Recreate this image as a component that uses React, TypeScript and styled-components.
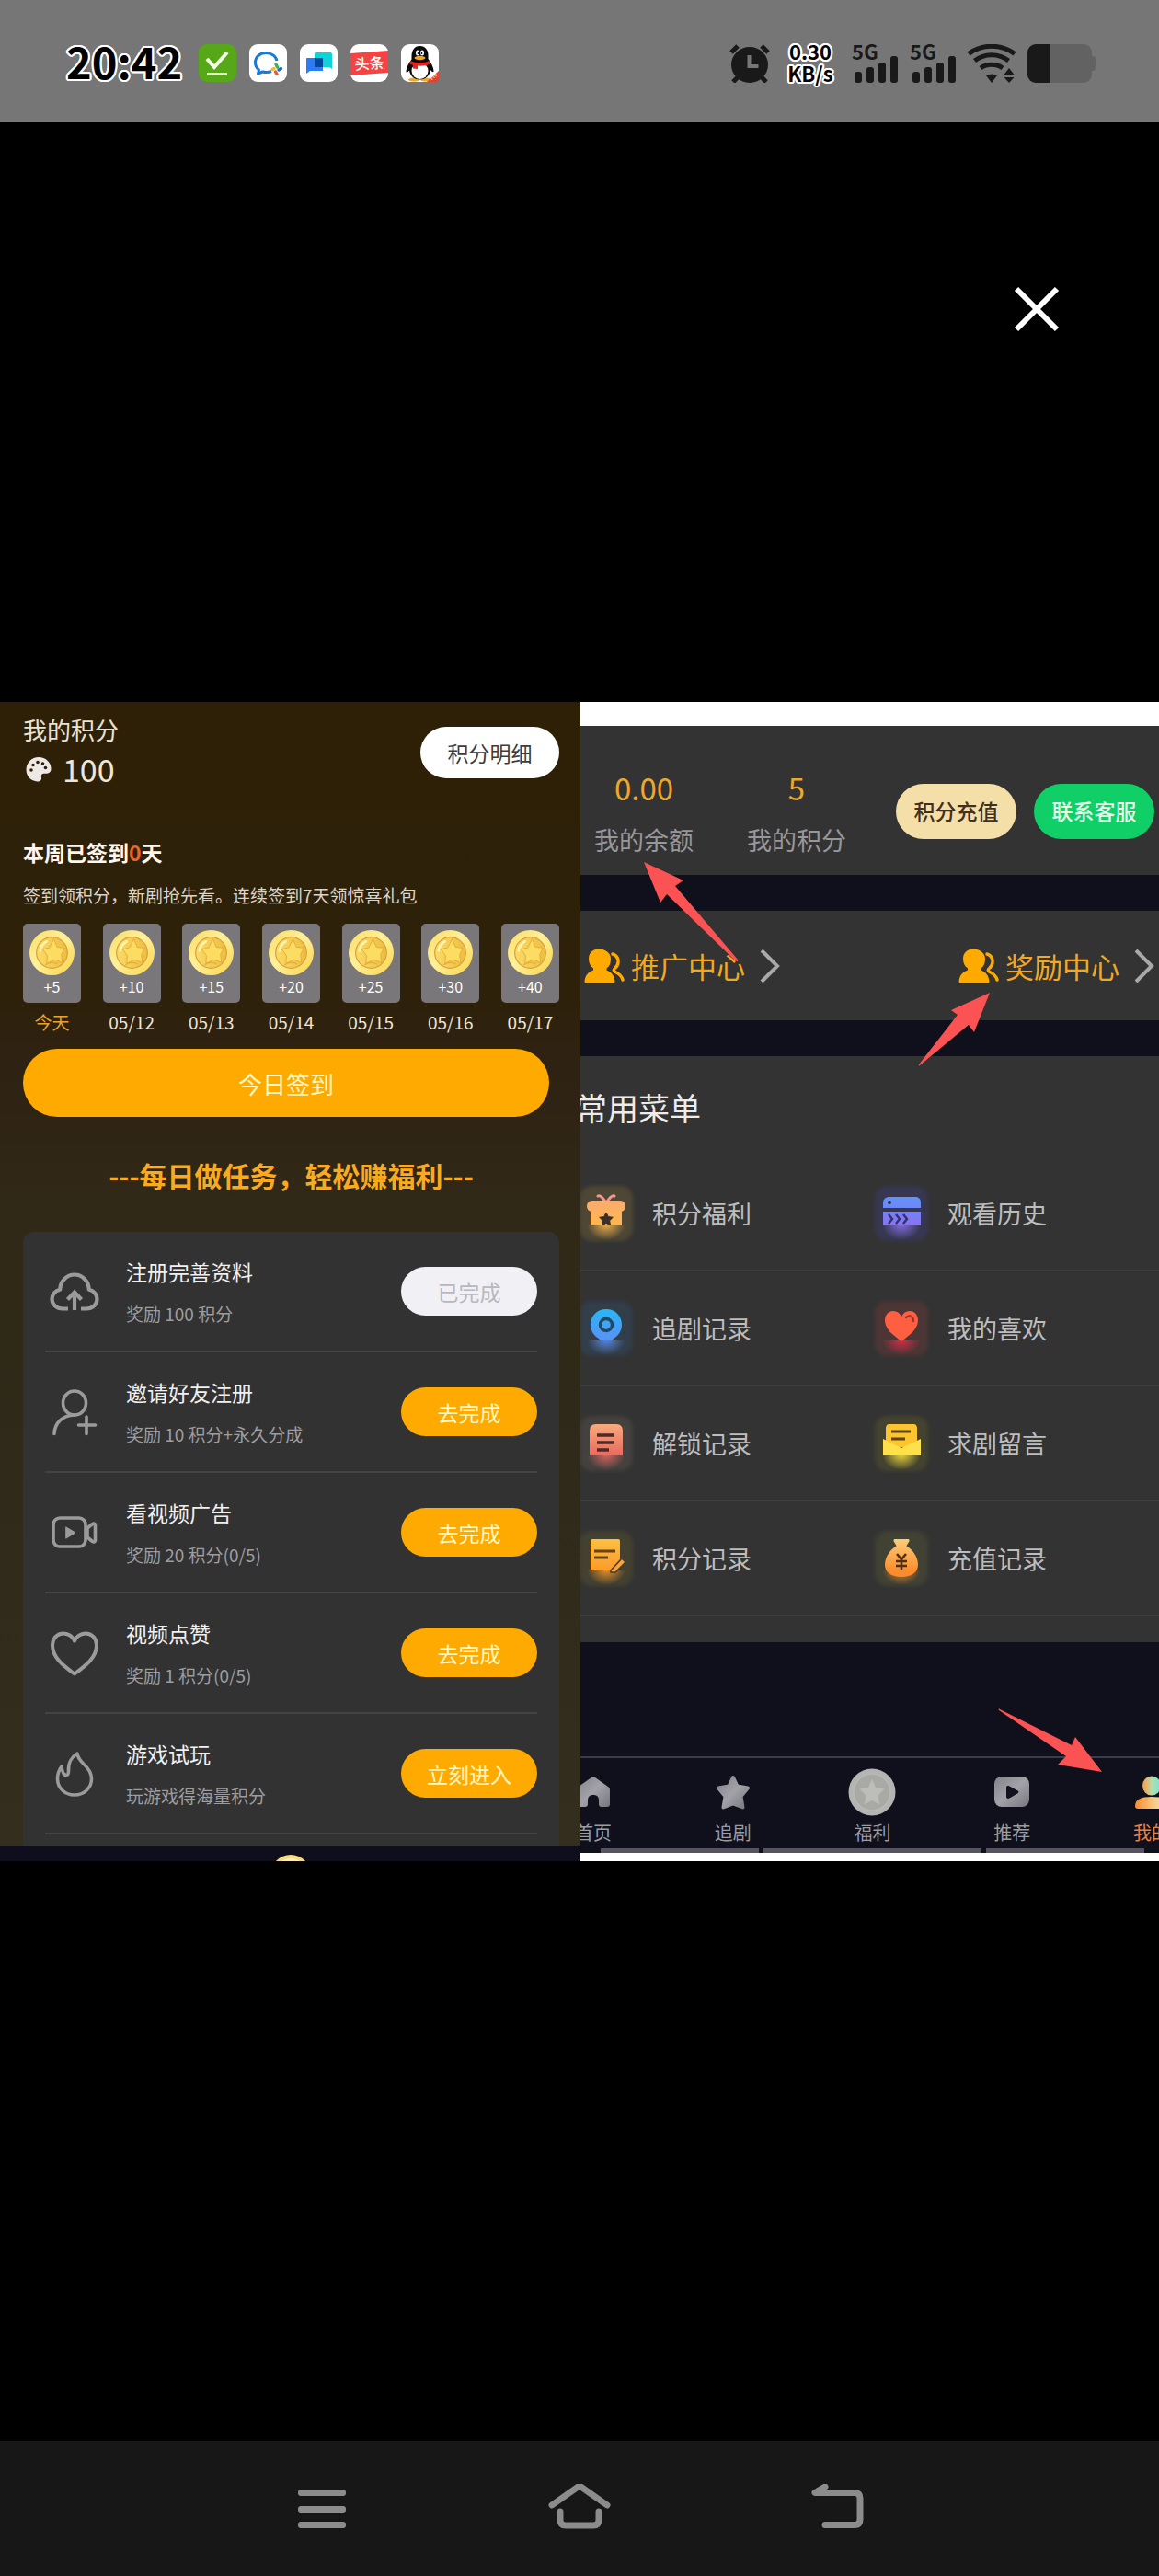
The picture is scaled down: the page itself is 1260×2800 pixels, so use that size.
import React from "react";
import styled, { createGlobalStyle } from "styled-components";

const GlobalStyle = createGlobalStyle`
  *, *::before, *::after { box-sizing: border-box; }
  html { background: #000; }
  body {
    margin: 0;
    background: #000;
    font-family: "Noto Sans CJK SC", "Noto Sans", sans-serif;
    color: #fff;
  }
  h2, h3, p, ul { margin: 0; padding: 0; font-weight: inherit; }
  ul { list-style: none; }
  svg { display: block; flex: none; }
  button { border: 0; margin: 0; padding: 0; font: inherit; color: inherit; background: none; cursor: pointer; }
  a { color: inherit; text-decoration: none; }
`;

const OUTLINE = `
  text-shadow: 2px 0 0 #fff, -2px 0 0 #fff, 0 2px 0 #fff, 0 -2px 0 #fff,
    1px 2px 0 #fff, -1px 2px 0 #fff, 1px -2px 0 #fff, -1px -2px 0 #fff,
    2px 1px 0 #fff, -2px 1px 0 #fff, 2px -1px 0 #fff, -2px -1px 0 #fff;
`;

const Page = styled.div`
  display: flex;
  flex-direction: column;
  min-height: 100vh;
  background: #000;
`;

/* ---------- status bar ---------- */
const StatusBar = styled.header`
  display: flex;
  align-items: center;
  justify-content: space-between;
  height: 133px;
  padding: 4px 69px 0 72px;
  background: #767676;
`;
const StatusGroup = styled.div<{ $gap: number }>`
  display: flex;
  align-items: center;
  gap: ${(p) => p.$gap}px;
`;
const Clock = styled.time`
  margin-right: 4px;
  padding-bottom: 6px;
  font-size: 47px;
  line-height: 48px;
  font-weight: 700;
  color: #000;
  ${OUTLINE}
`;
const NetSpeed = styled.div`
  display: grid;
  justify-content: center;
  width: 54px;
  margin: 0 6px 0 4px;
  padding-bottom: 4px;
  text-align: center;
  font-size: 22px;
  line-height: 24px;
  font-weight: 700;
  color: #000;
  ${OUTLINE}
`;
const Signal = styled.div`
  position: relative;
  width: 51px;
  height: 42px;
  color: #191919;
`;
const SignalLabel = styled.span`
  position: absolute;
  top: -4px;
  left: 0;
  font-size: 22px;
  line-height: 22px;
  font-weight: 700;
`;

/* ---------- stage ---------- */
const Stage = styled.main`
  position: relative;
  flex: 1;
  display: flex;
  flex-direction: column;
  justify-content: center;
`;
const CloseButton = styled.button`
  position: absolute;
  top: 171px;
  right: 101px;
  display: grid;
  place-items: center;
  width: 64px;
  height: 64px;
`;
const Photo = styled.div`
  display: grid;
  grid-template-columns: 631fr 629fr;
`;

/* ---------- left panel ---------- */
const Rewards = styled.section`
  display: flex;
  flex-direction: column;
  min-width: 0;
  background: linear-gradient(#2d2007 0%, #2e2109 24%, #2e2213 32%, #312918 44%, #2f2919 60%, #332e1e 100%);
`;
const RewardsBody = styled.div`
  display: flex;
  flex-direction: column;
  padding: 12px 23px 0 25px;
`;
const PointsHead = styled.div`
  display: flex;
  align-items: center;
  justify-content: space-between;
`;
const PointsTitle = styled.h2`
  font-size: 26px;
  line-height: 36px;
  color: #e9e3d6;
`;
const PointsValue = styled.div`
  display: flex;
  align-items: center;
  gap: 12px;
  margin-top: 3px;
  padding: 0 0 3px 3px;
  font-size: 34px;
  line-height: 44px;
  color: #efe6da;
`;
const DetailButton = styled.button`
  width: 151px;
  height: 56px;
  border-radius: 28px;
  background: #fff;
  color: #3c3c3c;
  font-size: 23px;
`;
const WeekTitle = styled.h3`
  margin-top: 48px;
  font-size: 23px;
  line-height: 34px;
  font-weight: 700;
  color: #fbf6ee;
`;
const WeekCount = styled.span`
  color: #ea6529;
`;
const WeekHint = styled.p`
  margin-top: 15px;
  font-size: 19px;
  line-height: 30px;
  color: #ddd5c8;
  white-space: nowrap;
`;
const Days = styled.ul`
  display: flex;
  justify-content: space-between;
  margin-top: 16px;
`;
const Day = styled.li<{ $today?: boolean }>`
  display: flex;
  flex-direction: column;
  align-items: center;
  gap: 9px;
  width: 63px;
  font-size: 19px;
  line-height: 24px;
  white-space: nowrap;
  color: ${(p) => (p.$today ? "#eba32b" : "#efe6da")};
`;
const CoinBox = styled.div`
  display: flex;
  flex-direction: column;
  align-items: center;
  width: 63px;
  height: 86px;
  padding-top: 7px;
  border-radius: 5px;
  background: #79777a;
  color: #fff;
  font-size: 16px;
`;
const SignButton = styled.button`
  height: 74px;
  margin: 17px 11px 0 0;
  border-radius: 37px;
  background: #ffaa00;
  color: #fff8c4;
  font-size: 26px;
`;
const TaskHeading = styled.h2`
  margin-top: 41px;
  text-align: center;
  font-size: 30px;
  line-height: 44px;
  font-weight: 700;
  color: #faaa1e;
`;
const Tasks = styled.ul`
  margin-top: 40px;
  padding: 0 24px 12px;
  border-radius: 12px 12px 0 0;
  background: #323232;
`;
const Task = styled.li`
  display: flex;
  align-items: center;
  height: 131px;
  padding-left: 4px;
  border-bottom: 2px solid #444;
  color: #9b9b9b;
`;
const TaskText = styled.div`
  flex: 1;
  margin-left: 28px;
`;
const TaskTitle = styled.h3`
  font-size: 23px;
  line-height: 32px;
  color: #f0f0f0;
`;
const TaskHint = styled.p`
  margin-top: 16px;
  font-size: 19px;
  line-height: 28px;
  color: #9d9da0;
`;
const TaskButton = styled.button<{ $done?: boolean }>`
  width: 148px;
  height: 53px;
  border-radius: 27px;
  font-size: 23px;
  background: ${(p) => (p.$done ? "#f1f1f5" : "#ffaa00")};
  color: ${(p) => (p.$done ? "#b9b7c0" : "#fff8c4")};
`;
const RewardsFoot = styled.div`
  display: flex;
  justify-content: center;
  height: 17px;
  padding-top: 9px;
  border-top: 1px solid #77757a;
  background: #0f0e1c;
  overflow: hidden;
`;

/* ---------- right panel ---------- */
const Profile = styled.section`
  position: relative;
  min-width: 0;
  overflow: hidden;
  padding: 26px 0 9px;
  background: #fff;
`;
/* The screen is wider than the panel, which crops it on both sides. */
const Screen = styled.div`
  display: flex;
  flex-direction: column;
  gap: 39px;
  margin: 0 -68px 0 -62px;
  background: #10101c;
`;
const Block = styled.div`
  background: #333;
`;
const Balance = styled(Block)`
  display: flex;
  align-items: center;
  padding: 49px 73px 22px 48px;
`;
const Stat = styled.div`
  display: grid;
  gap: 23px;
  width: 166px;
  text-align: center;
`;
const StatValue = styled.div`
  font-size: 33px;
  line-height: 36px;
  color: #eba92c;
`;
const StatLabel = styled.div`
  font-size: 27px;
  line-height: 32px;
  color: #98989b;
`;
const PillGroup = styled.div`
  display: flex;
  gap: 19px;
  margin: 0 0 4px auto;
`;
const Pill = styled.button<{ $green?: boolean }>`
  width: 131px;
  height: 60px;
  padding-bottom: 2px;
  border-radius: 30px;
  font-size: 23px;
  font-weight: 500;
  white-space: nowrap;
  background: ${(p) => (p.$green ? "#10cf66" : "#f5dfa8")};
  color: ${(p) => (p.$green ? "#e6fbe9" : "#40301f")};
`;
const Centers = styled(Block)`
  display: flex;
  align-items: center;
  justify-content: space-between;
  height: 119px;
  padding: 0 73px 0 66px;
`;
const CenterLink = styled.a`
  display: flex;
  align-items: center;
  font-size: 31px;
  line-height: 44px;
  color: #f2a81f;
`;
const CenterName = styled.span`
  margin: 0 16px 0 7px;
`;
const Menu = styled(Block)`
  padding-bottom: 28px;
`;
const MenuTitle = styled.h2`
  padding: 32px 0 29px 57px;
  font-size: 34px;
  line-height: 48px;
  color: #ececec;
`;
const MenuRow = styled.ul`
  display: grid;
  grid-template-columns: 321px 1fr;
  align-items: center;
  height: 125px;
  padding-left: 58px;
  border-bottom: 2px solid #3f3f40;
`;
const MenuLink = styled.a`
  display: flex;
  align-items: center;
  gap: 18px;
  font-size: 27px;
  line-height: 40px;
  color: #bdbdbe;
`;
const Tabs = styled.nav`
  display: grid;
  grid-template-columns: repeat(5, 1fr);
  margin-top: 85px;
  padding-top: 11px;
  border-top: 2px solid #3c3b47;
`;
const Tab = styled.a<{ $active?: boolean }>`
  display: flex;
  flex-direction: column;
  align-items: center;
  gap: 4px;
  font-size: 20px;
  line-height: 28px;
  color: ${(p) => (p.$active ? "#e5834c" : "#9c9ca3")};
`;
const Strip = styled.div`
  display: grid;
  grid-template-columns: 172fr 238fr 172fr;
  gap: 5px;
  margin: -36px 84px 0;
`;
const StripBar = styled.span`
  height: 5px;
  background: #575361;
`;
const Arrows = styled.svg`
  position: absolute;
  top: 0;
  left: 0;
  width: 100%;
  pointer-events: none;
`;

/* ---------- system navigation ---------- */
const SystemBar = styled.nav`
  display: flex;
  justify-content: center;
  gap: 200px;
  height: 147px;
  background: #171717;
`;
const SystemButton = styled.button`
  display: grid;
  place-items: center;
  width: 80px;
  color: #8c8c8c;
`;

/* ---------- drawings ---------- */
const Defs = () => (
  <svg width="0" height="0" style={{ position: "absolute" }} aria-hidden="true">
    <defs>
      <linearGradient id="gold" x1="0" y1="0" x2="1" y2="1">
        <stop offset="0" stopColor="#fbdc62" />
        <stop offset="0.45" stopColor="#fff09a" />
        <stop offset="1" stopColor="#fbd448" />
      </linearGradient>
      <linearGradient id="goldIn" x1="0" y1="0" x2="1" y2="0">
        <stop offset="0" stopColor="#fadb66" />
        <stop offset="1" stopColor="#efbd40" />
      </linearGradient>
      <linearGradient id="silver" x1="0" y1="0" x2="1" y2="1">
        <stop offset="0" stopColor="#84838a" />
        <stop offset="0.5" stopColor="#a3a2a9" />
        <stop offset="1" stopColor="#77767d" />
      </linearGradient>
      <linearGradient id="meHead" x1="0" y1="0" x2="1" y2="0">
        <stop offset="0.1" stopColor="#f3a64f" />
        <stop offset="0.5" stopColor="#b9dcae" />
        <stop offset="1" stopColor="#6fe6d2" />
      </linearGradient>
      <linearGradient id="meBody" x1="0" y1="0" x2="1" y2="0">
        <stop offset="0" stopColor="#fb8a2e" />
        <stop offset="0.5" stopColor="#f7c37a" />
        <stop offset="1" stopColor="#e7efc5" />
      </linearGradient>
      <filter id="soft" x="-20%" y="-20%" width="140%" height="140%">
        <feGaussianBlur stdDeviation="2" />
      </filter>
    </defs>
  </svg>
);

const Coin = ({ size }: { size: number }) => (
  <svg width={size} height={size} viewBox="0 0 48 48" aria-hidden="true">
    <circle cx="24" cy="24" r="24" fill="url(#gold)" />
    <circle cx="24" cy="24" r="16.500" fill="url(#goldIn)" stroke="#d9a13c" strokeWidth="1.200" />
    <path d="M11.500 22c.5-4 3-8 7-10" stroke="#fff3b0" strokeWidth="2.500" fill="none" strokeLinecap="round" />
    <path d="M17 37c4-3 9-3 13-1" stroke="#e5b040" strokeWidth="1.500" fill="none" />
    <path
      d="M26 9.500l3.500 8.500 8 1-3.500 7 1 8.500-8.500-3-8 4 .5-8.500-5-6.500 7.500-2z"
      fill="#fddc62"
      stroke="#e3aa3e"
      strokeWidth="0.900"
      strokeLinejoin="round"
    />
  </svg>
);

const Palette = () => (
  <svg width="28" height="28" viewBox="0 0 28 28" aria-hidden="true">
    <path d="M14 1C6.500 1 .5 7 .5 14.500S6 27 12.500 27.500c3 .2 5-1.500 4.500-4.500-.5-3.200.5-4.500 3.500-4.300 4.500.3 7-1 7-5.200C27.500 6.500 21.500 1 14 1z" fill="#efe9e6" />
    <g fill="#2d2007">
      <circle cx="6" cy="15" r="1.800" />
      <circle cx="8" cy="9.500" r="1.800" />
      <circle cx="13" cy="6.500" r="1.800" />
      <circle cx="18.500" cy="8" r="1.800" />
      <circle cx="21.500" cy="12.500" r="1.800" />
    </g>
  </svg>
);

const TaskIcon = ({ children }: { children: React.ReactNode }) => (
  <svg width="56" height="56" viewBox="0 0 56 56" fill="none" stroke="currentColor" strokeWidth="3.600" strokeLinecap="round" strokeLinejoin="round" aria-hidden="true">
    {children}
  </svg>
);

const CloudIcon = (
  <TaskIcon>
    <path d="M21 46.500h-6C8.500 46.500 3.500 42 3.500 36c0-5.200 3.700-9.300 8.700-10.200C12.500 16.500 19.500 9.500 28 9.500s15.500 7 15.800 16.300c5 .9 8.700 5 8.700 10.200 0 6-5 10.500-11.500 10.500h-6" strokeWidth="4.200" strokeLinecap="butt" />
    <path d="M28 48V29M20.500 36.500L28 28.500l7.500 8" strokeWidth="4.200" strokeLinecap="butt" strokeLinejoin="miter" />
  </TaskIcon>
);
const InviteIcon = (
  <TaskIcon>
    <ellipse cx="28" cy="18" rx="12.500" ry="13" />
    <path d="M6 51.500C6.500 39.500 15 31.500 28 31" />
    <path d="M41 33v18.500M32.500 42h18" />
  </TaskIcon>
);
const VideoIcon = (
  <TaskIcon>
    <rect x="5" y="12" width="35" height="31" rx="7" />
    <path d="M42 23l5.500-4.500c1.500-1 3-.5 3 1.500v16c0 2-1.500 2.500-3 1.500L42 33z" />
    <path d="M19 22l10 6-10 6z" fill="currentColor" strokeWidth="1" />
  </TaskIcon>
);
const HeartIcon = (
  <TaskIcon>
    <path d="M28 50.500C15 41 4 32 4 19.500 4 12 9 6.500 16 6.500c5.500 0 9.500 3 12 8 2.500-5 6.500-8 12-8 7 0 12 5.500 12 13C52 32 41 41 28 50.500z" strokeWidth="4" />
  </TaskIcon>
);
const FlameIcon = (
  <TaskIcon>
    <path d="M31 6C25 9.500 21 16.500 21.500 25c.1 3-1 4.500-2.300 4.500-3 0-4.700-4-5.200-9.500C11 24 9.500 28.500 9.500 33.500 9.500 43.500 17.500 51 28 51s18.500-7.500 18.500-17.500c0-7.500-4-12-8.500-16C34.500 14 31.500 11 31 6z" />
  </TaskIcon>
);

const PeopleIcon = () => (
  <svg width="44" height="38" viewBox="0 0 44 38" aria-hidden="true">
    <path d="M16 .5C9.500.5 5 5 5 11c0 5 2 8.500 5 10.500v2C4 26 1 29.500.5 36c0 .8.5 1.500 1.500 1.500h30c1 0 1.500-.7 1.500-1.500-.5-6.500-3.500-10-9-12.500v-2c3-2 4.500-5.500 4.500-10.500C29 5 23 .5 16 .5z" fill="#ffaa00" />
    <path d="M31 6c7 2 8 11 2.500 15.500C31.500 23 32 24.500 34 25.500c4 2 7 4.500 8 8.500" fill="none" stroke="#ffaa00" strokeWidth="3.400" strokeLinecap="round" />
  </svg>
);
const Chevron = () => (
  <svg width="22" height="36" viewBox="0 0 22 36" fill="none" stroke="#a9a9a9" strokeWidth="4" aria-hidden="true">
    <path d="M2 1l17 17L2 35" />
  </svg>
);

type TileProps = { tint: string; from: string; to: string; id: string; children: React.ReactNode };
const Tile = ({ tint, from, to, id, children }: TileProps) => (
  <svg width="64" height="64" viewBox="0 0 64 64" aria-hidden="true">
    <defs>
      <linearGradient id={id} gradientUnits="userSpaceOnUse" x1="0" y1="10" x2="0" y2="46">
        <stop offset="0" stopColor={from} />
        <stop offset="1" stopColor={to} />
      </linearGradient>
      <radialGradient id={id + "g"} gradientUnits="userSpaceOnUse" cx="32" cy="44" r="21" gradientTransform="translate(0 8.800) scale(1 0.800)">
        <stop offset="0" stopColor={to} stopOpacity="0.900" />
        <stop offset="0.500" stopColor={to} stopOpacity="0.450" />
        <stop offset="1" stopColor={to} stopOpacity="0" />
      </radialGradient>
    </defs>
    <rect x="3" y="2" width="58" height="60" rx="14" fill={tint} opacity="0.18" filter="url(#soft)" />
    <path d="M8 45h48v17H8z" fill={`url(#${id}g)`} />
    <g fill={`url(#${id})`}>{children}</g>
  </svg>
);

const INK = "#3b2f26";
const GiftTile = (
  <Tile id="gift" tint="#c9a040" from="#f9a778" to="#ffb84d">
    <path d="M31 19c-4-6-6-7-8-6M33 19c4-6 6-7 8-6" fill="none" stroke="#f29a8c" strokeWidth="3" strokeLinecap="round" />
    <path d="M17 18h30c4 0 6 3 6 6s-2 6-6 6H17c-4 0-6-3-6-6s2-6 6-6z" />
    <path d="M15 29h34v16H15z" />
    <path d="M32 31l2.300 4.600 5 .7-3.600 3.500.9 5L32 42.400l-4.600 2.400.9-5-3.600-3.500 5-.7z" fill={INK} stroke={INK} />
  </Tile>
);
const HistoryTile = (
  <Tile id="hist" tint="#4a4ae0" from="#5c97fb" to="#8a72ef">
    <path d="M12 26v-5c0-5 3-7 7-7h28c4 0 6 2 6 7v5z" />
    <path d="M12 30h41v15H12z" />
    <circle cx="19" cy="20" r="2" fill="#29305c" />
    <path d="M18 33l4 5-4 5M26 33l4 5-4 5M34 33l4 5-4 5" fill="none" stroke="#35306b" strokeWidth="2.400" />
  </Tile>
);
const PinTile = (
  <Tile id="pin" tint="#2f6fb0" from="#27b8f6" to="#5d8ff5">
    <path d="M32 11c10 0 17 7.500 17 17 0 7-4 12-9 15l-2 2H26l-2-2c-5-3-9-8-9-15 0-9.500 7-17 17-17z" />
    <circle cx="32" cy="28" r="6.500" fill="none" stroke="#23485f" strokeWidth="3.400" />
  </Tile>
);
const LoveTile = (
  <Tile id="love" tint="#c04040" from="#ff6f45" to="#e82a4a">
    <path d="M32 46C23 39 14 33 14 23c0-6 4-10 9-10 4 0 7 2 9 6 2-4 5-6 9-6 5 0 9 4 9 10 0 10-9 16-18 23z" fill="#fd5f40" />
    <path d="M37 20c4-3 8-1 8 4" fill="none" stroke="#a92f24" strokeWidth="2.400" strokeLinecap="round" />
  </Tile>
);
const UnlockTile = (
  <Tile id="unlock" tint="#908070" from="#f9ac7c" to="#e8685f">
    <path d="M21 11h22c5 0 7 3 7 8v26H14V19c0-5 2-8 7-8z" />
    <path d="M22 23h19M22 31h19M22 39h13" stroke="#4c2a26" strokeWidth="3.400" fill="none" />
  </Tile>
);
const MessageTile = (
  <Tile id="msg" tint="#8f8f20" from="#fbc62c" to="#fbe63c">
    <path d="M19 11h26c3 0 4 2 4 5v20H15V16c0-3 1-5 4-5z" fill="#fcc42e" />
    <path d="M12 27l20 10 21-10v18H12z" fill="#fde04a" />
    <path d="M21 19h21M21 27h15" stroke="#5c4410" strokeWidth="3.200" fill="none" />
  </Tile>
);
const NoteTile = (
  <Tile id="note" tint="#90802c" from="#fbc143" to="#fb9a2a">
    <path d="M17 11h28c1.500 0 2 1 2 2v24l-8 8H15V13c0-1 .5-2 2-2z" />
    <path d="M19 24h23M19 31h15" stroke="#6a4312" strokeWidth="3" fill="none" />
    <path d="M37 45l12-13 4 4-11 11h-5z" fill="#fba63a" stroke="#4f3b26" strokeWidth="1.600" />
  </Tile>
);
const BagTile = (
  <Tile id="bag" tint="#80803a" from="#fbcf7c" to="#fb8c2c">
    <path d="M25 11h14c2 0 2 2 1 3l-3 5H27l-3-5c-1-1-1-3 1-3z" />
    <path d="M27 18h10c7 4 13 12 13 21 0 8-7 13-18 13S14 47 14 39c0-9 6-17 13-21z" />
    <path d="M27 27l5 6 5-6M32 33v12M26 35h12M26 40h12" stroke="#4f3014" strokeWidth="2.600" fill="none" />
  </Tile>
);

const TabIcon = ({ children }: { children: React.ReactNode }) => (
  <svg width="52" height="52" viewBox="0 0 52 52" fill="url(#silver)" aria-hidden="true">
    {children}
  </svg>
);

const AppIcon = ({ bg, children }: { bg: string; children: React.ReactNode }) => (
  <svg width="41" height="41" viewBox="0 0 41 41" aria-hidden="true">
    <rect width="41" height="41" rx="9" fill={bg} />
    {children}
  </svg>
);

const SignalBars = () => (
  <Signal>
    <SignalLabel>5G</SignalLabel>
    <svg width="51" height="42" viewBox="0 0 51 42" fill="currentColor" aria-hidden="true">
      <rect x="3" y="30" width="8" height="12" rx="3" />
      <rect x="16" y="25" width="8" height="17" rx="3" />
      <rect x="29" y="20" width="8" height="22" rx="3" />
      <rect x="42" y="13" width="8" height="29" rx="3" />
    </svg>
  </Signal>
);

/* ---------- content ---------- */
const days = [
  ["+5", "今天"],
  ["+10", "05/12"],
  ["+15", "05/13"],
  ["+20", "05/14"],
  ["+25", "05/15"],
  ["+30", "05/16"],
  ["+40", "05/17"],
];

const tasks = [
  { icon: CloudIcon, title: "注册完善资料", hint: "奖励 100 积分", action: "已完成", done: true },
  { icon: InviteIcon, title: "邀请好友注册", hint: "奖励 10 积分+永久分成", action: "去完成" },
  { icon: VideoIcon, title: "看视频广告", hint: "奖励 20 积分(0/5)", action: "去完成" },
  { icon: HeartIcon, title: "视频点赞", hint: "奖励 1 积分(0/5)", action: "去完成" },
  { icon: FlameIcon, title: "游戏试玩", hint: "玩游戏得海量积分", action: "立刻进入" },
];

const menu = [
  [{ icon: GiftTile, name: "积分福利" }, { icon: HistoryTile, name: "观看历史" }],
  [{ icon: PinTile, name: "追剧记录" }, { icon: LoveTile, name: "我的喜欢" }],
  [{ icon: UnlockTile, name: "解锁记录" }, { icon: MessageTile, name: "求剧留言" }],
  [{ icon: NoteTile, name: "积分记录" }, { icon: BagTile, name: "充值记录" }],
];

const tabs = [
  {
    name: "首页",
    icon: (
      <TabIcon>
        <path d="M24 10c1-1 3-1 4 0l14 10c1.500 1 2 2 2 4v15c0 2-1 3-3 3h-6c-2 0-3-1-3-3v-4c0-4-2-6-6-6s-6 2-6 6v4c0 2-1 3-3 3h-6c-2 0-3-1-3-3V24c0-2 .5-3 2-4z" />
      </TabIcon>
    ),
  },
  {
    name: "追剧",
    icon: (
      <TabIcon>
        <path d="M26 10l4.500 9.500L42 21.500l-7.500 9 2 12L26 38.500 15.500 42.500l2-12-7.500-9 11.500-2z" stroke="url(#silver)" strokeWidth="4" strokeLinejoin="round" />
      </TabIcon>
    ),
  },
  {
    name: "福利",
    icon: (
      <TabIcon>
        <circle cx="26" cy="26" r="25.500" fill="#b4b5b2" />
        <circle cx="26" cy="26" r="20" fill="#a9aaa6" stroke="#b9bab6" strokeWidth="1.500" />
        <path d="M26 12l4 9 9.500 1.500-7 7 1.700 10L26 35l-8.200 4.500 1.700-10-7-7L22 21z" fill="#bdbdb9" />
      </TabIcon>
    ),
  },
  {
    name: "推荐",
    icon: (
      <TabIcon>
        <rect x="7" y="9" width="38" height="33" rx="8" />
        <path d="M20 21c0-2 2-2.500 3.500-1.500l9 5c1.200.7 1.200 2 0 2.800l-9 5.200C22 33.500 20 33 20 31z" fill="#12111d" />
      </TabIcon>
    ),
  },
  {
    name: "我的",
    active: true,
    icon: (
      <TabIcon>
        <ellipse cx="26" cy="19" rx="10" ry="10.500" fill="url(#meHead)" />
        <path d="M8 41c0-7 6-10 18-10s18 3 18 10c0 2-1 3-3 3H11c-2 0-3-1-3-3z" fill="url(#meBody)" />
      </TabIcon>
    ),
  },
];

export default function App() {
  return (
    <Page>
      <GlobalStyle />
      <Defs />
      <StatusBar>
        <StatusGroup $gap={14}>
          <Clock>20:42</Clock>
          <AppIcon bg="#57a818">
            <path d="M9 16l8 9L31 9" fill="none" stroke="#f6ffe9" strokeWidth="4" />
            <path d="M9 32.500h22" stroke="#e6f7cf" strokeWidth="3" />
          </AppIcon>
          <AppIcon bg="#fff">
            <path d="M30 18c-1-5-6-8.500-12-8.500-7 0-11.500 5-11.500 10.500 0 3 1.500 6 4 8l-1 4 5-2c4 1 7 .5 9.500-.5" fill="none" stroke="#1a7bd7" strokeWidth="3" strokeLinejoin="round" />
            <g strokeWidth="3.400" strokeLinecap="round">
              <path d="M29 22l1.500 3" stroke="#3fb549" />
              <path d="M32 28l2.500-1.500" stroke="#1a6fd0" />
              <path d="M28.500 30l1.500 2.500" stroke="#f0572a" />
              <path d="M25 27.500l2-1" stroke="#f8b72c" />
            </g>
          </AppIcon>
          <AppIcon bg="#fff">
            <path d="M17 9h16c1.500 0 2 1 2 2v16l-3-2H16V11c0-1 0-2 1-2z" fill="#0fd3d8" />
            <path d="M8 15h17v14H11l-4 3V16c0-.6.400-1 1-1z" fill="#2a7cf8" />
            <path d="M16 15h9v10h-9z" fill="#04479d" />
          </AppIcon>
          <AppIcon bg="#fff">
            <path d="M0 10l41-3v24L0 34z" fill="#f54242" />
            <text x="20.500" y="27" textAnchor="middle" fontSize="16" fontWeight="500" fill="#fff" transform="rotate(-4 20.500 20.500)">头条</text>
          </AppIcon>
          <AppIcon bg="#fff">
            <ellipse cx="14" cy="38.500" rx="6" ry="2" fill="#f8a71b" />
            <ellipse cx="27" cy="38.500" rx="6" ry="2" fill="#f8a71b" />
            <path d="M20.500 2c6 0 9 4.500 9 10v4c3 4 5.500 8 6 13 0 2-1.500 1.500-3.500-1-1 6-5 10.500-11.500 10.500S10 34.500 9 28.500c-2 2.500-3.500 3-3.500 1 .5-5 3-9 6-13v-4c0-5.500 3-10.500 9-10.500z" fill="#0a0a0a" />
            <ellipse cx="20.500" cy="29" rx="9" ry="9" fill="#fff" />
            <ellipse cx="18" cy="9.500" rx="2" ry="3" fill="#fff" />
            <ellipse cx="23" cy="9.500" rx="2" ry="3" fill="#fff" />
            <circle cx="18.500" cy="10" r="0.900" />
            <circle cx="22.500" cy="10" r="0.900" />
            <ellipse cx="20.500" cy="15" rx="6" ry="2.200" fill="#f8a71b" />
            <path d="M10.500 18c5 3 15 3 20 0l1 3.500c-6 3-15 3-22 0z" fill="#e8231e" />
            <path d="M13 21h5v6l-5-.5z" fill="#e8231e" />
            <path d="M41 29v8c0 2.500-1.500 4-4 4h-9z" fill="#e8402c" />
            <text x="36" y="37" textAnchor="middle" fontSize="5" fill="#fff" transform="rotate(-45 36 36)">Pro</text>
          </AppIcon>
        </StatusGroup>
        <StatusGroup $gap={12}>
          <svg width="46" height="42" viewBox="0 0 46 42" fill="#191919" aria-hidden="true">
            <path d="M3 9l7-7M43 9l-7-7" stroke="#191919" strokeWidth="5" />
            <ellipse cx="23" cy="22.500" rx="20" ry="19.500" />
            <path d="M10 36l-5 5M36 36l5 5" stroke="#191919" strokeWidth="5" />
            <path d="M22.500 12v12h10" fill="none" stroke="#767676" strokeWidth="4" />
          </svg>
          <NetSpeed>
            <span>0.30</span>
            <span>KB/s</span>
          </NetSpeed>
          <SignalBars />
          <SignalBars />
          <svg width="52" height="42" viewBox="0 0 52 42" fill="none" stroke="#191919" aria-hidden="true">
            <path d="M1 10.500C15-.5 37-.5 51 10.500M7.500 18c11-8.500 26-8.500 37 0M14 26c7-5 17-5 24 0" strokeWidth="5" />
            <path d="M20 34c4-2 8-2 12 0l-6 8zM45 26l5.500 7h-11zM45 42l5.500-6h-11z" fill="#191919" stroke="none" />
          </svg>
          <svg width="75" height="42" viewBox="0 0 75 42" aria-hidden="true">
            <path d="M26 0h36a9 9 0 0 1 9 9v4c3 0 4 1 4 3v10c0 2-1 3-4 3v4a9 9 0 0 1-9 9H26z" fill="#626262" />
            <path d="M26 0H10A9 9 0 0 0 1 9v24a9 9 0 0 0 9 9h16z" fill="#191919" />
          </svg>
        </StatusGroup>
      </StatusBar>

      <Stage>
        <CloseButton aria-label="关闭">
          <svg width="50" height="50" viewBox="0 0 50 50" stroke="#fff" strokeWidth="6" aria-hidden="true">
            <path d="M3 3l44 44M47 3L3 47" />
          </svg>
        </CloseButton>
        <Photo>
          <Rewards>
            <RewardsBody>
              <PointsHead>
                <div>
                  <PointsTitle>我的积分</PointsTitle>
                  <PointsValue>
                    <Palette />
                    100
                  </PointsValue>
                </div>
                <DetailButton>积分明细</DetailButton>
              </PointsHead>
              <WeekTitle>
                本周已签到<WeekCount>0</WeekCount>天
              </WeekTitle>
              <WeekHint>签到领积分，新剧抢先看。连续签到7天领惊喜礼包</WeekHint>
              <Days>
                {days.map(([bonus, date], i) => (
                  <Day key={date} $today={i === 0}>
                    <CoinBox>
                      <Coin size={49} />
                      {bonus}
                    </CoinBox>
                    {date}
                  </Day>
                ))}
              </Days>
              <SignButton>今日签到</SignButton>
              <TaskHeading>---每日做任务，轻松赚福利---</TaskHeading>
              <Tasks>
                {tasks.map((t) => (
                  <Task key={t.title}>
                    {t.icon}
                    <TaskText>
                      <TaskTitle>{t.title}</TaskTitle>
                      <TaskHint>{t.hint}</TaskHint>
                    </TaskText>
                    <TaskButton $done={t.done}>{t.action}</TaskButton>
                  </Task>
                ))}
              </Tasks>
            </RewardsBody>
            <RewardsFoot>
              <svg width="44" height="44" viewBox="0 0 44 44" aria-hidden="true">
                <circle cx="22" cy="22" r="22" fill="#f6d981" />
                <circle cx="22" cy="22" r="18" fill="#fdeeb6" />
              </svg>
            </RewardsFoot>
          </Rewards>

          <Profile>
            <Screen>
              <Balance>
                <Stat>
                  <StatValue>0.00</StatValue>
                  <StatLabel>我的余额</StatLabel>
                </Stat>
                <Stat>
                  <StatValue>5</StatValue>
                  <StatLabel>我的积分</StatLabel>
                </Stat>
                <PillGroup>
                  <Pill>积分充值</Pill>
                  <Pill $green>联系客服</Pill>
                </PillGroup>
              </Balance>
              <Centers>
                {["推广中心", "奖励中心"].map((name) => (
                  <CenterLink href="#" key={name}>
                    <PeopleIcon />
                    <CenterName>{name}</CenterName>
                    <Chevron />
                  </CenterLink>
                ))}
              </Centers>
              <Menu>
                <MenuTitle>常用菜单</MenuTitle>
                {menu.map((row) => (
                  <MenuRow key={row[0].name}>
                    {row.map((item) => (
                      <li key={item.name}>
                        <MenuLink href="#">
                          {item.icon}
                          {item.name}
                        </MenuLink>
                      </li>
                    ))}
                  </MenuRow>
                ))}
              </Menu>
              <Tabs>
                {tabs.map((t) => (
                  <Tab href="#" key={t.name} $active={t.active}>
                    {t.icon}
                    {t.name}
                  </Tab>
                ))}
              </Tabs>
              <Strip>
                <StripBar />
                <StripBar />
                <StripBar />
              </Strip>
            </Screen>
            <Arrows viewBox="0 0 629 1260" fill="#fb5353" aria-hidden="true">
              <path d="M69 174l43 20-9 6 68 80c1 2-1 3-3 1L94 209l-7 9z" />
              <path d="M445 316l-17 43-6-8-53 44c-1 1-2 0-1-1l42-54-7-5z" />
              <path d="M567 1163l-48-8 9-9-73-50c-1-1 0-2 1-1l78 39 4-9z" />
            </Arrows>
          </Profile>
        </Photo>
      </Stage>

      <SystemBar>
        <SystemButton aria-label="菜单">
          <svg width="54" height="54" viewBox="0 0 54 54" fill="currentColor" aria-hidden="true">
            <rect x="1" y="6" width="52" height="7" rx="3" />
            <rect x="1" y="24" width="52" height="7" rx="3" />
            <rect x="1" y="41" width="52" height="7" rx="3" />
          </svg>
        </SystemButton>
        <SystemButton aria-label="主页">
          <svg width="68" height="54" viewBox="0 0 68 54" fill="none" stroke="currentColor" strokeWidth="7" strokeLinecap="round" strokeLinejoin="round" aria-hidden="true">
            <path d="M4 23L34 2l30 21" strokeWidth="7" />
            <path d="M13 30v9c0 4 2 6 6 6h30c4 0 6-2 6-6v-9" />
          </svg>
        </SystemButton>
        <SystemButton aria-label="返回">
          <svg width="58" height="54" viewBox="0 0 58 54" fill="none" stroke="currentColor" strokeWidth="7" strokeLinecap="round" strokeLinejoin="round" aria-hidden="true">
            <path d="M16 3L5 9.500h43c4 0 6 2 6 6v23c0 4-2 6-6 6H16" />
          </svg>
        </SystemButton>
      </SystemBar>
    </Page>
  );
}
